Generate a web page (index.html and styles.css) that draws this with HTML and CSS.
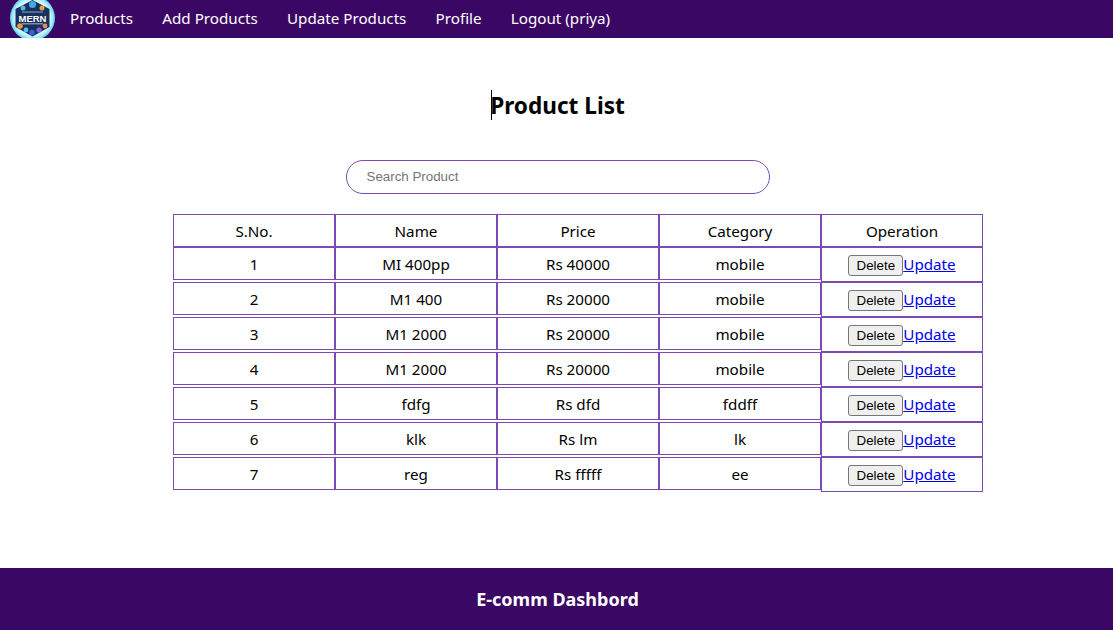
FILE: index.html
```html
<!DOCTYPE html>
<html lang="en">
<head>
<meta charset="utf-8">
<title>Product List</title>
<link rel="stylesheet" href="styles.css">
</head>
<body>
<nav class="nav">
  <svg class="logo" width="45" height="45" viewBox="0 0 45 45" aria-label="MERN logo">
    <defs>
      <radialGradient id="glow" cx="50%" cy="50%" r="50%">
        <stop offset="72%" stop-color="#eafcff"/>
        <stop offset="90%" stop-color="#9beaf7"/>
        <stop offset="100%" stop-color="#5cc8e8"/>
      </radialGradient>
    </defs>
    <circle cx="22.5" cy="19" r="22.5" fill="url(#glow)"/>
    <polygon points="22.5,1 39.5,10 39.5,28 22.5,37.5 5.5,28 5.5,10" fill="#17305c"/>
    <circle cx="22.5" cy="5.5" r="3.5" fill="#3fa9e8"/>
    <circle cx="13" cy="9" r="2.5" fill="#58b8d8"/>
    <circle cx="32" cy="9" r="2.5" fill="#e8a13c"/>
    <circle cx="10" cy="27" r="2.8" fill="#e89a40"/>
    <circle cx="16" cy="31" r="2.4" fill="#58c0e0"/>
    <circle cx="22" cy="33.5" r="2.8" fill="#3a5fe0"/>
    <circle cx="29" cy="31" r="2.6" fill="#8f5ad8"/>
    <circle cx="35" cy="27" r="2.4" fill="#e88858"/>
    <rect x="12" y="12.5" width="21" height="1" fill="#8fa5c5"/>
    <text class="logo-text" x="22.5" y="22.5" text-anchor="middle">MERN</text>
    <rect x="12" y="24" width="21" height="1.5" fill="#7a8fb0"/>
  </svg>
  <ul class="menu">
    <li><a href="#">Products</a></li>
    <li><a href="#">Add Products</a></li>
    <li><a href="#">Update Products</a></li>
    <li><a href="#">Profile</a></li>
    <li><a href="#">Logout (priya)</a></li>
  </ul>
</nav>
<main class="content">
  <h1 class="title"><span class="title-text">Product List</span></h1>
  <input class="search" type="text" placeholder="Search Product">
  <div class="table">
    <ul class="row head"><li>S.No.</li><li>Name</li><li>Price</li><li>Category</li><li>Operation</li></ul>
    <ul class="row"><li>1</li><li>MI 400pp</li><li>Rs 40000</li><li>mobile</li><li class="op"><button type="button">Delete</button><a href="#">Update</a></li></ul>
    <ul class="row"><li>2</li><li>M1 400</li><li>Rs 20000</li><li>mobile</li><li class="op"><button type="button">Delete</button><a href="#">Update</a></li></ul>
    <ul class="row"><li>3</li><li>M1 2000</li><li>Rs 20000</li><li>mobile</li><li class="op"><button type="button">Delete</button><a href="#">Update</a></li></ul>
    <ul class="row"><li>4</li><li>M1 2000</li><li>Rs 20000</li><li>mobile</li><li class="op"><button type="button">Delete</button><a href="#">Update</a></li></ul>
    <ul class="row"><li>5</li><li>fdfg</li><li>Rs dfd</li><li>fddff</li><li class="op"><button type="button">Delete</button><a href="#">Update</a></li></ul>
    <ul class="row"><li>6</li><li>klk</li><li>Rs lm</li><li>lk</li><li class="op"><button type="button">Delete</button><a href="#">Update</a></li></ul>
    <ul class="row"><li>7</li><li>reg</li><li>Rs fffff</li><li>ee</li><li class="op"><button type="button">Delete</button><a href="#">Update</a></li></ul>
  </div>
</main>
<footer class="footer">E-comm Dashbord</footer>
</body>
</html>
```
FILE: styles.css
```css
* { box-sizing: border-box; }
html, body { margin: 0; padding: 0; }
body {
  font-family: "Noto Sans", "Open Sans", sans-serif;
  font-size: 15.2px;
  color: #000;
  background: #fff;
}
.nav {
  display: flex;
  align-items: flex-start;
  height: 38px;
  padding-left: 10px;
  background: #3b0764;
  overflow: hidden;
}
.logo { display: block; flex: none; margin-top: -1px; }
.logo-text { font: 700 9.5px "Liberation Sans", sans-serif; fill: #fff; }
.menu {
  display: flex;
  gap: 29.2px;
  margin: 0 0 0 15px;
  padding: 0;
  list-style: none;
}
.menu a {
  display: block;
  color: #fff;
  text-decoration: none;
  line-height: 37px;
}
.content {
  display: flex;
  flex-direction: column;
  align-items: center;
  height: 530px;
  padding: 52px 0 0 2px;
}
.title {
  margin: 0 0 39px;
  font-size: 22.6px;
  font-weight: 700;
  line-height: 30px;
}
.title-text { position: relative; display: block; padding-top: 1px; }
.title-text::before {
  content: "";
  position: absolute;
  left: 1px;
  top: 0;
  width: 1px;
  height: 30px;
  background: #000;
}
.search {
  display: block;
  width: 424px;
  height: 34px;
  padding: 0 20px 2px;
  margin-bottom: 20px;
  border: 1px solid #7b4bb3;
  border-radius: 17px;
  outline: none;
  font-family: "Liberation Sans", Arial, sans-serif;
  font-size: 13.33px;
}
.search::placeholder { color: #757575; }
.table { width: 851px; padding-left: 41px; }
.row {
  display: flex;
  align-items: flex-start;
  margin: 0;
  padding: 0;
  list-style: none;
  height: 35px;
}
.row.head { height: 33px; }
.row li {
  flex: none;
  width: 162px;
  height: 33px;
  border: 1px solid #7b4bb3;
  text-align: center;
  line-height: 33px;
}
.row .op { height: 35px; }
.op button {
  width: 55px;
  height: 21px;
  padding: 0;
  border: 1px solid #767676;
  border-radius: 3px;
  background: #efefef;
  color: #000;
  font-family: "Liberation Sans", Arial, sans-serif;
  font-size: 13.33px;
  vertical-align: middle;
}
.op a {
  color: #0000ee;
  text-decoration: underline;
}
.footer {
  height: 62px;
  padding-left: 2px;
  background: #3b0764;
  color: #fff;
  font-size: 18px;
  font-weight: 700;
  line-height: 62px;
  text-align: center;
}
```
